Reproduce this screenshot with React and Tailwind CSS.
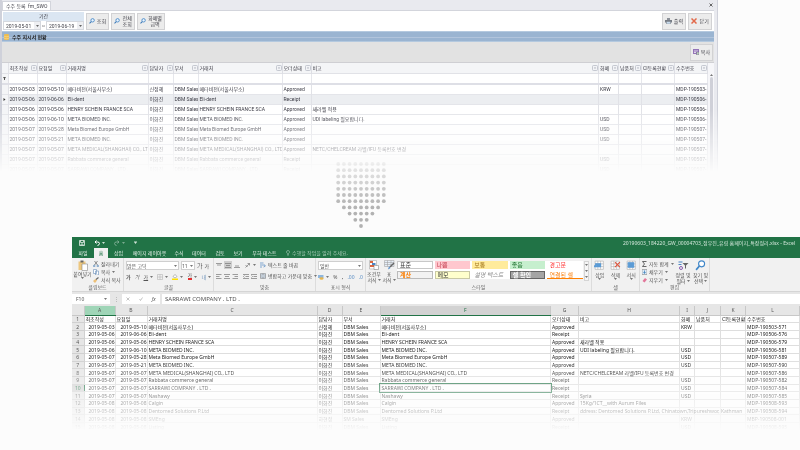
import React from "react";

/* ---------- data ---------- */

const ORDERS = [
  ["2019-05-03", "2019-05-10", "메타비전(서울사무소)", "신정혜", "DBM Sales", "Approved", "", "KRW", "MDP-190503-571"],
  ["2019-05-06", "2019-06-06", "Eli-dent", "이화진", "DBM Sales", "Receipt", "", "", "MDP-190506-576"],
  ["2019-05-06", "2019-05-06", "HENRY SCHEIN FRANCE SCA", "이화진", "DBM Sales", "Approved", "새라벨 적용", "", "MDP-190506-579"],
  ["2019-05-06", "2019-06-10", "META BIOMED INC.", "이화진", "DBM Sales", "Approved", "UDI labeling 필요합니다.", "USD", "MDP-190506-581"],
  ["2019-05-07", "2019-05-28", "Meta Biomed Europe GmbH", "이화진", "DBM Sales", "Approved", "", "USD", "MDP-190507-589"],
  ["2019-05-07", "2019-05-21", "META BIOMED INC.", "이화진", "DBM Sales", "Approved", "", "USD", "MDP-190507-590"],
  ["2019-05-07", "2019-05-07", "META MEDICAL(SHANGHAI) CO., LTD", "이화진", "DBM Sales", "Approved", "NETC/CHELCREAM 라벨/IFU 등록번호 변경", "", "MDP-190507-586"],
  ["2019-05-07", "2019-05-07", "Rabbata commerce general", "이화진", "DBM Sales", "Receipt", "", "USD", "MDP-190507-582"],
  ["2019-05-07", "2019-05-07", "SARRAWI COMPANY . LTD .", "이화진", "DBM Sales", "Receipt", "", "USD", "MDP-190507-584"],
  ["2019-05-07", "2019-05-07", "Nashawy", "이화진", "DBM Sales", "Receipt", "Syria", "USD", "MDP-190507-585"],
  ["2019-05-08", "2019-05-08", "Calgin", "이화진", "DBM Sales", "Approved", "15Kg/1CT__with Aurum Files", "", "MDP-190508-593"],
  ["2019-05-08", "2019-05-08", "Dentomed Solutions P.Ltd", "이화진", "DBM Sales", "Receipt", "ddress: Dentomed Solutions P.Ltd, Chinatown,Tripureshwor, Kathman", "", "MDP-190508-594"],
  ["2019-05-08", "2019-05-08", "SMEng", "하현정", "SM Sales", "Approved", "", "KRW", "MBP-190508-001"],
  ["2019-05-08", "2019-05-08", "Listing", "이화진", "DBM Sales", "Receipt", "", "USD", "MDP-190508-595"],
];

const HEADS = ["최초작성", "요청일", "거래처명", "담당자", "부서", "거래처", "오더상태", "비고", "화폐", "납품처", "CI등록현황", "수주번호"];

const toCells = (o) => [o[0], o[1], o[2], o[3], o[4], o[2], o[5], o[6], o[7], "", "", o[8]];

const GRID_COLS = ["w-[29px]", "w-[29px]", "w-[82px]", "w-[25px]", "w-[25px]", "w-[84px]", "w-[29px]", "", "w-[20px]", "w-[23px]", "w-[33px]", "w-[33px]"];
const SHEET_COLS = ["w-[31px]", "w-[32px]", "w-[170px]", "w-[25px]", "w-[38px]", "", "w-[28px]", "w-[101px]", "w-[15px]", "w-[26px]", "w-[25px]", "w-[54px]"];
const LETTERS = "ABCDEFGHIJKL".split("");

/* ---------- order screen ---------- */

function Search() {
  return (
    <svg viewBox="0 0 12 12" className="h-[6px] w-[6px] shrink-0" fill="none">
      <circle cx="7.2" cy="4.6" r="3.4" stroke="#4a8ac8" strokeWidth="1.8" fill="#eaf4fd" />
      <path d="M4.6 7.2 1 10.8" stroke="#3a78b8" strokeWidth="2.2" />
    </svg>
  );
}

function ToolButton({ icon, children, className }) {
  return (
    <button className={"flex h-[17px] items-center justify-around border border-[#d2d2d4] bg-[#ececec] px-px text-center leading-[6px] whitespace-nowrap " + className}>
      {icon}
      <span>{children}</span>
    </button>
  );
}

function DateBox({ value, label }) {
  return (
    <div className="flex h-[9px] w-[38px] items-center border border-[#d5d8de] bg-white">
      <input aria-label={label} defaultValue={value} className="w-[30px] pl-[2px] outline-none" />
      <button aria-label={label + " 선택"} className="flex h-full w-[6px] items-center justify-center bg-[#eeeff2]">
        <svg viewBox="0 0 6 4" className="w-[3px]"><path d="M0 0h6L3 4z" fill="#666" /></svg>
      </button>
    </div>
  );
}

function Toolbar() {
  return (
    <div className="flex h-[20px] items-center gap-[2px] bg-white pr-[2px] pl-[1px]">
      <div role="group" aria-label="기간" className="w-[81px] shrink-0">
        <div className="h-[9px] bg-[#dbe6f2] text-center leading-[9px]">기간</div>
        <div className="flex items-center justify-between">
          <DateBox value="2019-05-01" label="시작일" />
          <span>~</span>
          <DateBox value="2019-06-19" label="종료일" />
        </div>
      </div>
      <ToolButton icon={<Search />} className="w-[23px]">조회</ToolButton>
      <ToolButton icon={<Search />} className="w-[24px]">전체<br />조회</ToolButton>
      <ToolButton icon={<Search />} className="w-[28px]">화폐별<br />금액</ToolButton>
      <div className="flex-1" />
      <ToolButton
        className="w-[24px]"
        icon={
          <svg viewBox="0 0 14 12" className="h-[6px] w-[7px] shrink-0">
            <path d="M4 0h6v4H4z" fill="#8c9199" />
            <path d="M0 4h14v5H0z" fill="#777c85" />
            <path d="M3 7h8v5H3z" fill="#c9dcee" stroke="#777c85" />
          </svg>
        }
      >출력</ToolButton>
      <ToolButton
        className="w-[24px]"
        icon={
          <svg viewBox="0 0 12 12" className="h-[6px] w-[6px] shrink-0">
            <path d="M1 1l10 10M11 1 1 11" stroke="#e2694a" strokeWidth="3" />
          </svg>
        }
      >닫기</ToolButton>
    </div>
  );
}

function FilterMark() {
  return (
    <svg viewBox="0 0 12 12" className="h-[6px] w-[6px] shrink-0">
      <rect x="1" y="1" width="10" height="10" rx="2" fill="#f2f3f6" stroke="#b9bcc6" strokeWidth="1.6" />
      <path d="M4 5h4L6 8z" fill="#a4a8b4" />
    </svg>
  );
}

function OrderGrid() {
  return (
    <div className="flex">
      <table className="w-full min-w-0 flex-1 table-fixed border-collapse text-left text-[#3c3c46]">
        <colgroup>
          <col className="w-[6px]" />
          {GRID_COLS.map((w, i) => <col key={i} className={w} />)}
        </colgroup>
        <thead>
          <tr className="h-[10px] bg-[#f4f5f7]">
            <th className="border-r border-[#e1e2e7]" />
            {HEADS.map((h, i) => (
              <th key={i} className="border-r border-[#dddee4] p-0 font-normal">
                <div className="flex items-center justify-between pl-px whitespace-nowrap">
                  <span>{h}</span>
                  <FilterMark />
                </div>
              </th>
            ))}
          </tr>
          <tr className="h-[11px] border-t border-b-2 border-t-[#e1e2e7] border-b-[#dedfe6] bg-white">
            <td className="border-r border-[#e1e2e7] bg-[#f4f5f7] p-0 text-center">
              <svg viewBox="0 0 6 6" className="mx-auto w-[3px]"><path d="M0 0h6L4 3v3H2V3z" fill="#555" /></svg>
            </td>
            {HEADS.map((h, i) => <td key={i} className="border-r border-[#e6e7ec]" />)}
          </tr>
        </thead>
        <tbody>
          {ORDERS.slice(0, 9).map((o, r) => (
            <tr key={r} className={"h-[10px] border-b border-[#e4e5ea] " + (r === 1 ? "bg-[#eceef1]" : "bg-white")}>
              <td className="border-r border-[#e1e2e7] bg-[#f4f5f7] p-0">
                {r === 1 && <svg viewBox="0 0 6 6" className="mx-auto w-[3px]"><path d="M1 0l4 3-4 3z" fill="#333" /></svg>}
              </td>
              {toCells(o).map((c, i) => (
                <td key={i} className="overflow-hidden border-r border-[#e1e2e7] py-0 pr-0 pl-px whitespace-nowrap">{c}</td>
              ))}
            </tr>
          ))}
        </tbody>
      </table>
      <div className="w-[6px] bg-[#f6f6f9] pt-[11px]">
        <svg viewBox="0 0 6 4" className="mx-auto w-[3px]"><path d="M0 4h6L3 0z" fill="#777" /></svg>
        <div className="mx-auto mt-px h-full w-[3px] rounded-full bg-[#cfd0d8]" />
      </div>
    </div>
  );
}

function OrderScreen() {
  return (
    <section className="mr-[82px] h-[172px] overflow-hidden border-r border-l-2 border-[#cfd1da] bg-[#e9eaef] pr-[3px] font-['Roboto','Noto_Sans_CJK_KR',sans-serif] text-[5px] leading-[6px] text-[#44444c] [mask-image:linear-gradient(to_bottom,black_64%,transparent_100%)]">
      <div className="flex h-[11px] items-end justify-between border-b border-[#d3d5dc]">
        <h1 className="h-[9px] w-[49px] border border-b-0 border-[#d3d5dc] bg-white pl-[3px] leading-[8px]">수주 등록&nbsp; fm_SWO</h1>
        <button aria-label="탭 닫기" className="flex h-[10px] w-[6px] items-center justify-center">
          <svg viewBox="0 0 8 8" className="w-[4px]"><path d="M1 1l6 6M7 1 1 7" stroke="#666" strokeWidth="2" /></svg>
        </button>
      </div>
      <Toolbar />
      <div className="flex h-[11px] items-center gap-[3px] border-y border-[#b4c9df] bg-linear-to-b from-[#9ab4d1] from-50% via-[#b4c6dd] via-60% to-[#9ab4d1] to-70% pl-[2px]">
        <svg viewBox="0 0 10 12" className="h-[6px] w-[5px]">
          <path d="M0 2c0-3 10-3 10 0v8c0 3-10 3-10 0z" fill="#efbd50" />
          <path d="M0 4c2 2 8 2 10 0M0 8c2 2 8 2 10 0" stroke="#fae6b0" fill="none" />
        </svg>
        <h2 className="font-bold text-[#222]">수주 지시서 현황</h2>
      </div>
      <div className="flex h-[21px] items-center justify-end border-b border-[#cfcfd3] bg-[#e2e2e2] pr-px">
        <ToolButton
          className="w-[23px]"
          icon={
            <svg viewBox="0 0 12 12" className="h-[6px] w-[6px] shrink-0">
              <path d="M0 0h12v10H0z" fill="#9474b8" />
              <path d="M2 4h8M2 7h4" stroke="#fff" strokeWidth="1.4" />
              <path d="M7 6h5v6H7z" fill="#b9d4b8" stroke="#6c548c" />
            </svg>
          }
        >복사</ToolButton>
      </div>
      <OrderGrid />
    </section>
  );
}

/* ---------- arrow of dots ---------- */

const DOT_ROWS = [9, 9, 9, 9, 9, 9, 9, 7, 5, 3, 1];
const DOT_SHADES = ["#ececec", "#e2e2e2", "#dadada", "#d2d2d2", "#c9c9c9", "#c0c0c0", "#b9b9b9", "#b4b4b4", "#b2b2b2", "#b2b2b2", "#b2b2b2"];

function DotArrow() {
  return (
    <svg viewBox="0 0 52 68" className="mx-auto h-[68px] w-[52px]" aria-hidden="true">
      {DOT_ROWS.map((n, r) =>
        Array.from({ length: n }, (_, i) => (
          <circle key={r + "-" + i} cx={26 + (i - (n - 1) / 2) * 5.7} cy={3 + r * 6.2} r="1.9" fill={DOT_SHADES[r]} />
        ))
      )}
    </svg>
  );
}

/* ---------- spreadsheet ---------- */

function Caret() {
  return <svg viewBox="0 0 6 4" className="w-[3px] shrink-0"><path d="M0 0h6L3 4z" fill="#777" /></svg>;
}

function TitleBar() {
  return (
    <div className="flex h-[11px] items-center gap-[9px] bg-[#217346] pr-[5px] pl-[7px] text-[#d5e8dc]">
      <button aria-label="저장">
        <svg viewBox="0 0 12 12" className="h-[6px] w-[6px]" fill="none" stroke="#fff" strokeWidth="1.4"><path d="M1 1h10v10H1zM3 1v4h6V1M4 11V8h4v3" /></svg>
      </button>
      <button aria-label="실행 취소" className="flex items-center gap-[2px]">
        <svg viewBox="0 0 12 12" className="h-[6px] w-[6px]" fill="none" stroke="#fff" strokeWidth="2"><path d="M5 1 2 4l3 3M2 4h5q4 0 4 3t-4 4" /></svg>
        <svg viewBox="0 0 6 4" className="w-[3px]"><path d="M0 0h6L3 4z" fill="#cfe3d7" /></svg>
      </button>
      <button aria-label="다시 실행" className="flex items-center gap-[2px] opacity-40">
        <svg viewBox="0 0 12 12" className="h-[6px] w-[6px]" fill="none" stroke="#fff" strokeWidth="2"><path d="M7 1l3 3-3 3M10 4H5Q1 4 1 7t4 4" /></svg>
        <svg viewBox="0 0 6 4" className="w-[3px]"><path d="M0 0h6L3 4z" fill="#fff" /></svg>
      </button>
      <svg viewBox="0 0 6 6" className="w-[3px]"><path d="M0 0h6v1H0zM0 2h6L3 6z" fill="#cfe3d7" /></svg>
      <h2 className="ml-auto whitespace-nowrap">20190603_184220_GW_00004703_정우진_유림 홈페이지_특장정리.xlsx - Excel</h2>
    </div>
  );
}

function Tabs() {
  const tabs = [
    ["파일", "w-[22px]"], ["홈", "w-[14px]"], ["삽입", "w-[21px]"], ["페이지 레이아웃", "w-[41px]"], ["수식", "w-[18px]"],
    ["데이터", "w-[22px]"], ["검토", "w-[20px]"], ["보기", "w-[16px]"], ["부하 테스트", "w-[37px]"],
  ];
  return (
    <nav className="flex h-[10px] items-stretch bg-[#217346] text-[#e4f0e9]">
      {tabs.map(([t, w], i) => (
        <button key={t} className={w + " whitespace-nowrap " + (i === 1 ? "bg-[#f1f1f1] text-[#217346]" : "")}>{t}</button>
      ))}
      <label className="ml-[3px] flex flex-1 items-center gap-[2px] text-[#a9cbb8]">
        <svg viewBox="0 0 8 12" className="h-[6px] w-[4px]" fill="none" stroke="#a9cbb8" strokeWidth="1.2"><path d="M3 9V7Q1 6 1 4a3 3 0 0 1 6 0q0 2-2 3v2zM3 11h2" /></svg>
        <input aria-label="작업 검색" placeholder="수행할 작업을 알려 주세요." className="w-[90px] placeholder-[#a9cbb8] outline-none" />
      </label>
    </nav>
  );
}

function Group({ name, className, children }) {
  return (
    <div className={"flex flex-col border-r border-[#dcdcdc] pt-[2px] " + className}>
      <div className="flex h-[24px] items-start">{children}</div>
      <div className="h-[7px] text-center leading-[7px] text-[#666]">{name}</div>
    </div>
  );
}

function Mini({ label, text, children, caret, className = "" }) {
  return (
    <button aria-label={label} className={"flex h-[8px] items-center gap-[2px] whitespace-nowrap " + className}>
      {children}
      {text && <span>{text}</span>}
      {caret && <Caret />}
    </button>
  );
}

function Lines({ d = "M0 1h12M2 5h8M0 9h12" }) {
  return <svg viewBox="0 0 12 10" className="h-[5px] w-[6px]" stroke="#777" strokeWidth="1.4" fill="none"><path d={d} /></svg>;
}

function Big({ icon, a, b, className }) {
  return (
    <button className={"flex flex-col items-center leading-[6px] whitespace-nowrap " + className}>
      {icon}
      <span>{a}</span>
      {b ? <span className="flex items-center gap-px">{b}<Caret /></span> : <Caret />}
    </button>
  );
}

const STYLES = [
  ["표준", "border border-[#c8c8c8] bg-white text-[#333]"],
  ["나쁨", "bg-[#ffc7ce] text-[#c0394b]"],
  ["보통", "bg-[#ffeb9c] text-[#a5791f]"],
  ["좋음", "bg-[#c6efce] text-[#2a7a3a]"],
  ["경고문", "text-[#f44]"],
  ["계산", "border border-[#bbb] bg-[#f2f2f2] font-bold text-[#fa7d00]"],
  ["메모", "border border-[#c9c9a5] bg-[#ffffcc] text-[#333]"],
  ["설명 텍스트", "text-[#888] italic"],
  ["셀 확인", "border border-[#666] bg-[#a5a5a5] font-bold text-white"],
  ["연결된 셀", "border-b border-[#ff8001] text-[#fa8a20]"],
];

function Ribbon() {
  return (
    <div className="flex h-[34px] items-stretch border-b border-[#d5d5d5] bg-[#f1f1f1] text-[#555]">
      <Group name="클립보드" className="w-[52px]">
        <Big
          className="w-[21px]"
          a="붙여넣기"
          icon={
            <svg viewBox="0 0 20 22" className="h-[11px] w-[10px]">
              <path d="M1 3h14v17H1z" fill="#edc77f" /><path d="M5 1h6v4H5z" fill="#666" /><path d="M8 8h11v13H8z" fill="#fff" stroke="#777" />
            </svg>
          }
        />
        <div>
          <Mini text="잘라내기"><svg viewBox="0 0 12 12" className="w-[6px]" fill="none" stroke="#4a7fb5" strokeWidth="1.4"><path d="M3 0l6 8M9 0 3 8" stroke="#666" /><circle cx="2.5" cy="10" r="1.6" /><circle cx="9.5" cy="10" r="1.6" /></svg></Mini>
          <Mini text="복사" caret><svg viewBox="0 0 12 12" className="w-[6px]" fill="#fff" stroke="#6a8fb8" strokeWidth="1.2"><path d="M1 1h6v8H1zM5 4h6v8H5z" /></svg></Mini>
          <Mini text="서식 복사"><svg viewBox="0 0 12 12" className="w-[6px]"><path d="M0 8l5-4 3 3-4 5z" fill="#edc077" /><path d="M6 5l5-4" stroke="#666" strokeWidth="2.4" /></svg></Mini>
        </div>
      </Group>

      <Group name="글꼴" className="w-[90px]">
        <div className="flex w-full flex-col gap-[2px] px-[2px] pt-px">
          <div className="flex items-center gap-[2px]">
            <label className="flex h-[9px] w-[53px] items-center border border-[#cfcfcf] bg-white pr-px">
              <select aria-label="글꼴" className="flex-1 appearance-none outline-none"><option>맑은 고딕</option></select><Caret />
            </label>
            <label className="flex h-[9px] w-[14px] items-center border border-[#cfcfcf] bg-white pr-px">
              <select aria-label="크기" className="w-[8px] flex-1 appearance-none outline-none"><option>11</option></select><Caret />
            </label>
            <Mini label="글꼴 크게" className="text-[6px]"><span>가</span></Mini>
            <Mini label="글꼴 작게"><span>가</span></Mini>
          </div>
          <div className="flex h-[9px] items-center justify-between">
            <button className="font-bold">가</button>
            <button className="italic">가</button>
            <Mini caret label="밑줄"><span className="underline">가</span></Mini>
            <Mini caret label="테두리"><svg viewBox="0 0 12 12" className="w-[6px]" fill="none" stroke="#aaa"><path d="M1 1h10v10H1zM6 1v10M1 6h10" /></svg></Mini>
            <Mini caret label="채우기 색"><svg viewBox="0 0 12 12" className="w-[6px]"><path d="M2 5l4-4 4 4-4 3z" fill="#fff" stroke="#777" /><path d="M0 9h12v3H0z" fill="#ffe100" /></svg></Mini>
            <Mini caret label="글꼴 색"><span className="border-b-2 border-[#e53030] leading-[5px]">가</span></Mini>
            <Mini caret label="윗주"><span className="text-[#6a8fb8]">내</span></Mini>
          </div>
        </div>
      </Group>

      <Group name="맞춤" className="w-[102px]">
        <div className="grid w-full grid-cols-[44px_1fr] gap-y-[3px] pt-px pl-[2px]">
          <div className="flex items-center gap-[2px]">
            <Mini label="위쪽 맞춤"><Lines d="M0 1h12M2 4h8" /></Mini>
            <Mini label="가운데 맞춤" className="bg-[#cdcdcd] px-px"><Lines /></Mini>
            <Mini label="아래쪽 맞춤"><Lines d="M2 6h8M0 9h12" /></Mini>
            <Mini label="방향" caret className="ml-[3px]"><Lines d="M1 9 9 1M5 1h4v4M1 4l4 4" /></Mini>
          </div>
          <Mini text="텍스트 줄 바꿈"><svg viewBox="0 0 12 12" className="w-[6px]" fill="none" stroke="#5b8ec4" strokeWidth="1.5"><path d="M0 2h7M0 6h10q2 3-3 4M0 10h4" /></svg></Mini>
          <div className="flex items-center gap-[2px]">
            <Mini label="왼쪽"><Lines d="M0 1h11M0 5h7M0 9h11" /></Mini>
            <Mini label="가운데"><Lines /></Mini>
            <Mini label="오른쪽"><Lines d="M1 1h11M5 5h7M1 9h11" /></Mini>
            <Mini label="내어쓰기" className="ml-[3px]"><Lines d="M0 1h12M5 5h7M0 9h12M3 3 1 5l2 2" /></Mini>
            <Mini label="들여쓰기"><Lines d="M0 1h12M5 5h7M0 9h12M1 3l2 2-2 2" /></Mini>
          </div>
          <Mini text="병합하고 가운데 맞춤" caret><svg viewBox="0 0 12 12" className="w-[6px]" fill="#dbe9f6" stroke="#777"><path d="M1 1h10v10H1zM1 4h10M1 8h10M6 1v3M6 8v3" /></svg></Mini>
        </div>
      </Group>

      <Group name="표시 형식" className="w-[50px]">
        <div className="flex w-full flex-col gap-[2px] px-[2px] pt-px">
          <label className="flex h-[9px] items-center border border-[#cfcfcf] bg-white px-px">
            <select aria-label="표시 형식" className="flex-1 appearance-none outline-none"><option>일반</option></select><Caret />
          </label>
          <div className="flex h-[9px] items-center justify-between">
            <Mini label="회계" caret><svg viewBox="0 0 12 12" className="w-[6px]"><path d="M0 2h11v6H0z" fill="#8fb6dc" /><ellipse cx="7" cy="9" rx="4" ry="2.5" fill="#e8b64c" /></svg></Mini>
            <button>%</button>
            <button className="font-bold">,</button>
            <Mini label="자릿수 늘림"><span className="text-[#5b8ec4]">.00</span></Mini>
            <Mini label="자릿수 줄임"><span className="text-[#5b8ec4]">.0</span></Mini>
          </div>
        </div>
      </Group>

      <Group name="스타일" className="w-[226px]">
        <Big className="w-[16px]" a="조건부" b="서식" icon={
          <svg viewBox="0 0 20 20" className="mb-px h-[10px] w-[10px]"><path d="M1 1h14v17H1z" fill="#fff" stroke="#999" /><path d="M2 2h6v4H2zM2 10h8v4H2z" fill="#d9663f" /><path d="M6 6h7v4H6z" fill="#4a86c6" /><path d="M10 11h9v8h-9z" fill="#fff" stroke="#777" /></svg>
        } />
        <Big className="w-[14px]" a="표" b="서식" icon={
          <svg viewBox="0 0 22 20" className="mb-px h-[10px] w-[11px]"><path d="M1 1h19v12H1zM1 5h19M1 9h19M7 1v12M14 1v12" fill="#e6eef7" stroke="#999" /><path d="M8 19l2-6 3 3z" fill="#4a86c6" /><path d="M12 14l8-8" stroke="#666" strokeWidth="3" /></svg>
        } />
        <div className="mt-px ml-px grid flex-1 grid-cols-5 gap-[2px] bg-white text-[6px] leading-[6px]">
          {STYLES.map(([t, c]) => (
            <button key={t} className={"h-[8px] pl-[2px] text-left whitespace-nowrap " + c}>{t}</button>
          ))}
        </div>
        <div className="mt-px mr-[2px] ml-px flex h-[20px] w-[5px] flex-col items-center justify-between border border-[#d5d5d5] bg-[#f6f6f6] py-[2px]"><Caret /><Caret /><Caret /></div>
      </Group>

      <Group name="셀" className="w-[48px]">
        {[
          ["삽입", "M0 12h6l-3-3zM3 7h9v5H3z", "#5b9bd5"],
          ["삭제", "M9 4l9 9M18 4l-9 9", "#e0533a"],
          ["서식", "M4 5h10v8H4z", "#5b9bd5"],
        ].map(([t, d, c]) => (
          <Big key={t} className="flex-1" a={t} icon={
            <svg viewBox="0 0 20 20" className="mb-px h-[11px] w-[11px]"><path d="M2 2h15v15H2zM2 7h15M2 12h15M7 2v15M12 2v15" fill="#fff" stroke="#a5a5a5" /><path d={d} fill={c} stroke={c} strokeWidth="2" /></svg>
          } />
        ))}
      </Group>

      <Group name="편집" className="w-[70px]">
        <div className="w-[34px] pl-[2px]">
          <Mini text="자동 합계" caret><svg viewBox="0 0 10 12" className="h-[6px] w-[5px]" fill="none" stroke="#444" strokeWidth="1.6"><path d="M9 1H1l4 5-4 5h8" /></svg></Mini>
          <Mini text="채우기" caret><svg viewBox="0 0 10 12" className="h-[6px] w-[5px]"><path d="M0 1h10v10H0z" fill="#dbe9f6" stroke="#777" /><path d="M5 3v5M3 6l2 3 2-3" stroke="#2f75b5" fill="none" strokeWidth="1.4" /></svg></Mini>
          <Mini text="지우기" caret><svg viewBox="0 0 10 12" className="h-[6px] w-[5px]"><path d="M1 8l5-6 4 3-5 6z" fill="#e2779a" /></svg></Mini>
        </div>
        <Big className="w-[18px]" a="정렬 및" b="필터" icon={
          <svg viewBox="0 0 22 20" className="mb-px h-[11px] w-[11px]"><path d="M1 3h8M1 8h6" stroke="#4a86c6" strokeWidth="2.4" /><circle cx="6" cy="15" r="3" fill="none" stroke="#8a5fb0" strokeWidth="2" /><path d="M9 5h12l-5 5v7l-2-2v-5z" fill="#666" /></svg>
        } />
        <Big className="w-[17px]" a="찾기 및" b="선택" icon={
          <svg viewBox="0 0 20 20" className="mb-px h-[11px] w-[11px]"><circle cx="12" cy="7" r="5.5" fill="#fff" stroke="#3f86c8" strokeWidth="2" /><path d="M8 11l-6 7" stroke="#3f86c8" strokeWidth="3" /></svg>
        } />
      </Group>
    </div>
  );
}

function FormulaBar() {
  return (
    <div className="flex h-[14px] items-center bg-[#e6e6e6] text-[#555]">
      <label className="flex h-[10px] w-[38px] items-center justify-between bg-white pr-[3px] pl-[4px]">
        <input aria-label="이름 상자" defaultValue="F10" className="w-[20px] outline-none" /><Caret />
      </label>
      <span className="w-[12px] text-center text-[#999]">⋮</span>
      <div className="flex h-[10px] w-[38px] items-center justify-around bg-white">
        <button aria-label="취소"><svg viewBox="0 0 8 8" className="w-[4px]" stroke="#aaa" strokeWidth="1.4"><path d="M1 1l6 6M7 1 1 7" /></svg></button>
        <button aria-label="입력"><svg viewBox="0 0 8 8" className="w-[4px]" fill="none" stroke="#aaa" strokeWidth="1.4"><path d="M1 4l2 3 4-6" /></svg></button>
        <button aria-label="함수 삽입" className="italic">fx</button>
      </div>
      <input aria-label="수식 입력줄" defaultValue="SARRAWI COMPANY . LTD ." className="ml-[2px] h-[10px] flex-1 bg-white pl-[3px] text-[6px] outline-none" />
    </div>
  );
}

function Sheet() {
  const rows = [HEADS, ...ORDERS.map(toCells)];
  return (
    <table className="h-[125px] w-full table-fixed border-collapse bg-white text-[#222]">
      <colgroup>
        <col className="w-[12px]" />
        {SHEET_COLS.map((w, i) => <col key={i} className={w} />)}
      </colgroup>
      <thead>
        <tr className="h-[9px] bg-[#e6e6e6] text-[#555]">
          <th className="border-r border-b border-[#c8c8c8] p-0" />
          {LETTERS.map((l) => (
            <th
              key={l}
              className={
                "border-r border-b border-r-[#c8c8c8] p-0 font-normal " +
                (l === "A" ? "border-b-[#217346] bg-[#9fd5b7]" : l === "F" ? "border-b-[#217346] bg-[#d2d2d2] text-[#217346]" : "border-b-[#c8c8c8]")
              }
            >{l}</th>
          ))}
        </tr>
      </thead>
      <tbody>
        {rows.map((cells, r) => (
          <tr key={r}>
            <th className={"border-r border-b border-[#d0d0d0] p-0 text-center font-normal " + (r === 9 ? "border-r-[#217346] bg-[#d2d2d2] text-[#217346]" : "bg-[#e6e6e6] text-[#555]")}>{r + 1}</th>
            {cells.map((c, i) => (
              <td
                key={i}
                className={
                  "border-r border-b border-[#dedede] py-0 whitespace-nowrap " +
                  (r === 9 && i === 5 ? "outline outline-[#217346] " : "") +
                  (i < 2 && r > 0 ? "pr-0 pl-0 text-right " : "pr-0 pl-px ") +
                  (i === 7 ? "overflow-visible" : "overflow-hidden")
                }
              >{c}</td>
            ))}
          </tr>
        ))}
      </tbody>
    </table>
  );
}

function Spreadsheet() {
  return (
    <section className="ml-[72px] overflow-hidden bg-[#f1f1f1] font-['Noto_Sans','Noto_Sans_CJK_KR',sans-serif] text-[5px] leading-[6px] [mask-image:linear-gradient(to_bottom,black_62%,transparent_100%)]">
      <TitleBar />
      <Tabs />
      <Ribbon />
      <FormulaBar />
      <Sheet />
    </section>
  );
}

export default function App() {
  return (
    <main className="min-h-screen overflow-hidden bg-[#fcfcfc]">
      <OrderScreen />
      <div className="-mt-[11px] mb-[8px] pr-[78px]">
        <DotArrow />
      </div>
      <Spreadsheet />
    </main>
  );
}
